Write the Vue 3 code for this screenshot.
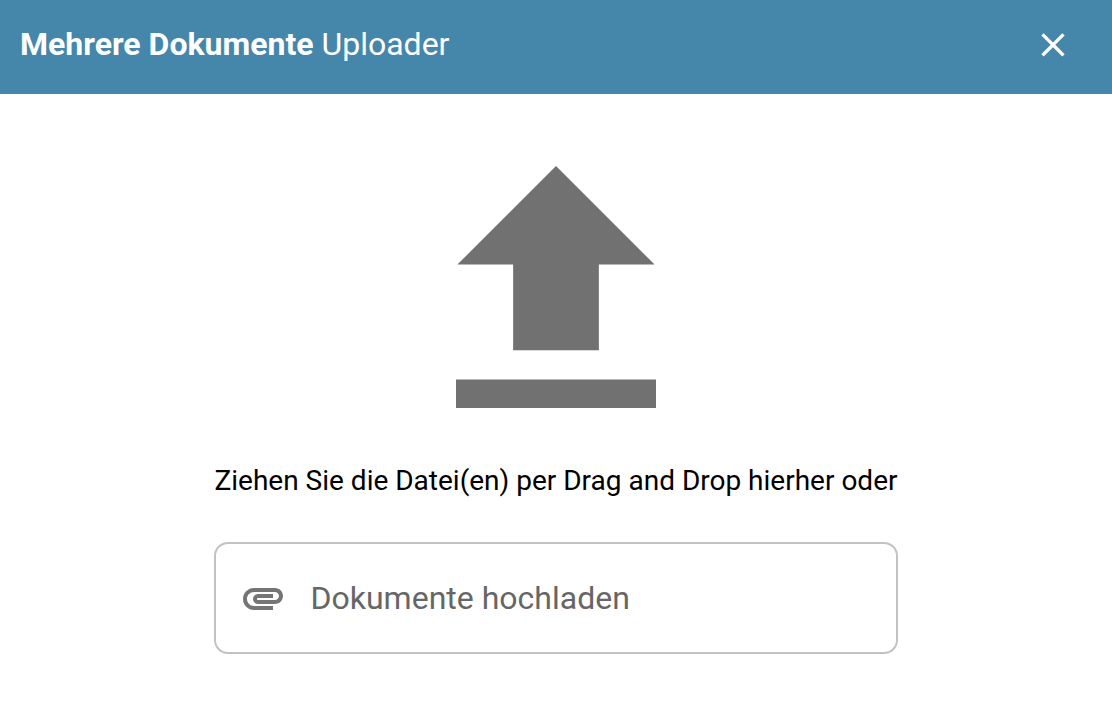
<script setup>
import { ref } from 'vue'

const open = ref(true)
const files = ref([])

function close() {
  open.value = false
}

function addFiles(list) {
  files.value = [...files.value, ...Array.from(list)]
}
</script>

<template>
  <section v-if="open" class="uploader" role="dialog" aria-labelledby="uploader-title">
    <header class="toolbar">
      <h1 id="uploader-title" class="title"><strong>Mehrere Dokumente</strong> Uploader</h1>
      <button class="close" type="button" aria-label="Schließen" @click="close">
        <svg viewBox="0 0 24 24" aria-hidden="true">
          <path d="M19 6.91L17.59 5.5 12 11.09 6.41 5.5 5 6.91 10.59 12.5 5 18.09 6.41 19.5 12 13.91 17.59 19.5 19 18.09 13.41 12.5z" />
        </svg>
      </button>
    </header>

    <main class="dropzone" @dragover.prevent @drop.prevent="addFiles($event.dataTransfer.files)">
      <svg class="upload" viewBox="5 3 14 17" preserveAspectRatio="xMidYMin slice" aria-hidden="true">
        <path d="M5.1 9.9H9v6h6v-6h3.9L12 3zM5 17.95v2.05h14v-2.05z" />
      </svg>
      <div class="picker">
        <p class="hint">Ziehen Sie die Datei(en) per Drag and Drop hierher oder</p>
        <label class="field" for="documents">
          <svg class="clip" viewBox="2 6 20 12" aria-hidden="true">
            <path d="M2 12.5C2 9.46 4.46 7 7.5 7H18c2.21 0 4 1.79 4 4s-1.79 4-4 4H9.5C8.12 15 7 13.88 7 12.5S8.12 10 9.5 10H17v2H9.41c-.55 0-.55 1 0 1H18c1.1 0 2-.9 2-2s-.9-2-2-2H7.5C5.57 9 4 10.57 4 12.5S5.57 16 7.5 16H17v2H7.5C4.46 18 2 15.54 2 12.5z" />
          </svg>
          <span>Dokumente hochladen</span>
          <input id="documents" class="file" type="file" multiple @change="addFiles($event.target.files)" />
        </label>
      </div>
    </main>
  </section>
</template>

<style>
body {
  margin: 0;
  background: #fff;
}
</style>

<style scoped>
.uploader {
  font-family: Roboto, "Liberation Sans", sans-serif;
  color: #000;
}

.toolbar {
  display: flex;
  align-items: center;
  justify-content: space-between;
  box-sizing: border-box;
  min-height: 94px;
  padding: 0 39px 6px 20px;
  background: #4487ab;
  color: #fff;
}

.title {
  margin: 0;
  font-size: 32px;
  line-height: 40px;
  font-weight: 400;
}

.title strong {
  font-weight: 700;
}

.close {
  display: flex;
  padding: 0;
  border: 0;
  background: none;
  color: inherit;
  cursor: pointer;
}

.close svg {
  width: 40px;
  height: 40px;
  fill: currentColor;
}

.dropzone {
  display: flex;
  flex-direction: column;
  align-items: center;
  padding: 72px 20px 68px;
}

.upload {
  width: 200px;
  height: 242px;
  fill: #717171;
}

.hint {
  margin: 53px 0 41px;
  padding: 0 1px;
  font-size: 28px;
  line-height: 40px;
  text-align: center;
}

.field {
  position: relative;
  display: flex;
  align-items: center;
  gap: 28px;
  box-sizing: border-box;
  min-height: 112px;
  padding: 0 27px;
  border: 2px solid #c2c2c2;
  border-radius: 14px;
  color: #666;
  font-size: 32px;
  line-height: 40px;
  cursor: pointer;
}

.clip {
  width: 40px;
  height: 24px;
  fill: #757575;
}

.file {
  position: absolute;
  inset: 0;
  width: 100%;
  opacity: 0;
  cursor: pointer;
}
</style>
